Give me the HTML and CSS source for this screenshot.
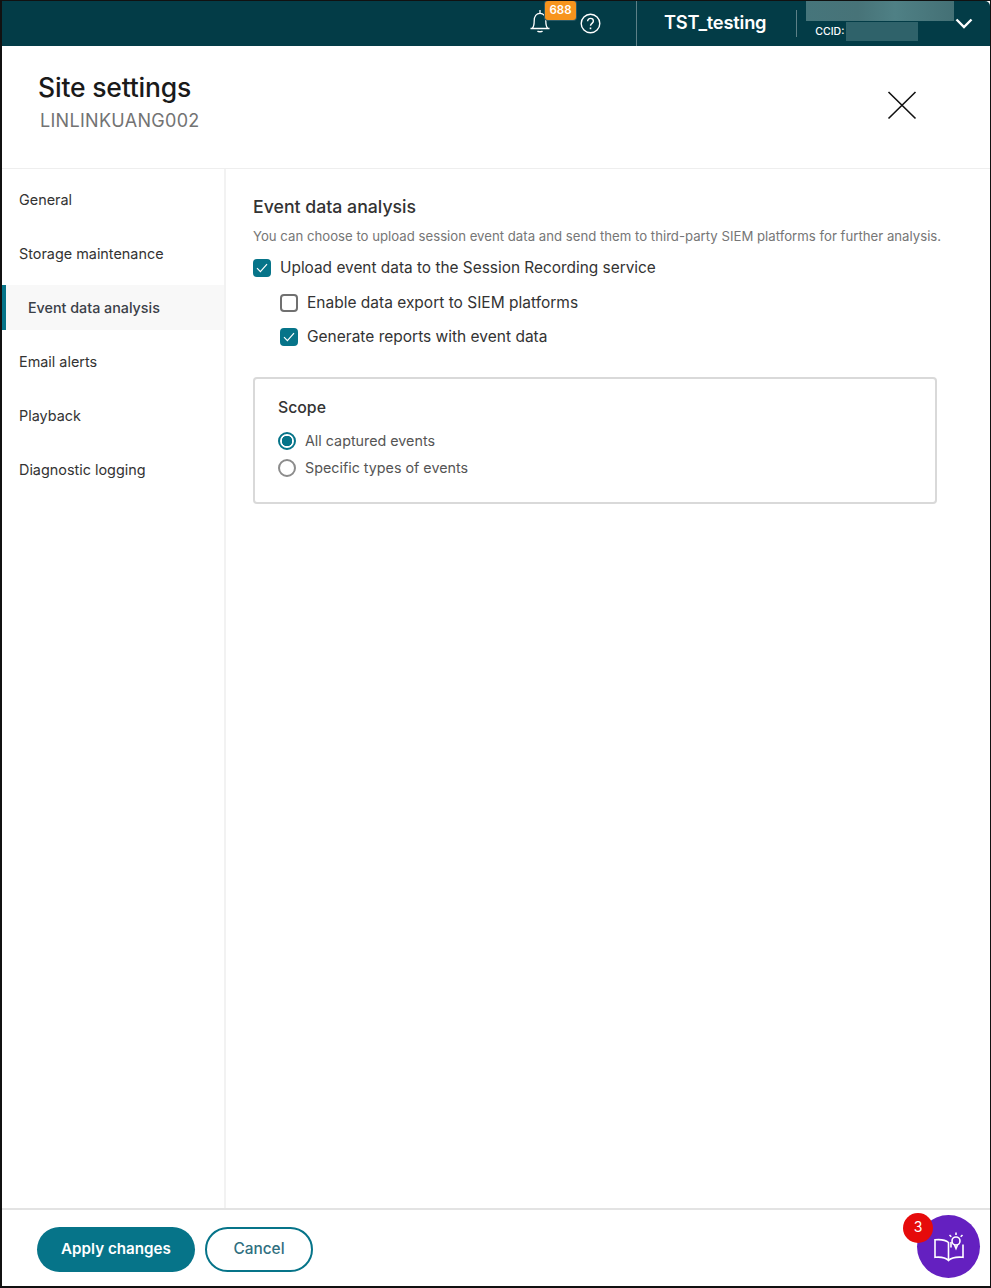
FILE: index.html
```html
<!DOCTYPE html>
<html lang="en">
<head>
<meta charset="utf-8">
<title>Site settings</title>
<link rel="stylesheet" href="styles.css">
</head>
<body>
<div class="frame">
  <header class="topbar">
    <div class="bell-wrap">
      <svg class="bell" width="22" height="24" viewBox="0 0 22 24" fill="none" stroke="#fff" stroke-width="1.3"><path d="M1.500 19.500h19M3 19.500c1.800-1.600 2.200-3.600 2.200-7.500 0-4.500 2.200-7.600 5.800-7.600s5.800 3.100 5.800 7.600c0 3.900.4 5.900 2.200 7.500"/><path d="M11 1v3.400M8.500 22c.8 1 4.200 1 5 0"/></svg>
      <span class="badge">688</span>
    </div>
    <svg class="help" width="21" height="21" viewBox="0 0 21 21" fill="none" stroke="#fff" stroke-width="1.400"><circle cx="10.500" cy="10.500" r="9.300"/><path d="M7.600 8.300c0-1.800 1.300-2.900 2.900-2.900s2.900 1.100 2.900 2.700c0 2.200-2.900 2.300-2.900 4.600"/><path d="M10.500 14.500v1.700" stroke-width="1.600"/></svg>
    <div class="divider tall"></div>
    <div class="tenant">TST_testing</div>
    <div class="divider short"></div>
    <div class="account">
      <div class="blur-name"></div>
      <div class="ccid-row"><span class="ccid">CCID:</span><span class="blur-id"></span></div>
    </div>
    <svg class="chev" width="18" height="11" viewBox="0 0 18 11" fill="none" stroke="#fff" stroke-width="2.400"><path d="M1.500 1.500L9 9l7.500-7.500"/></svg>
  </header>

  <section class="title-area">
    <div>
      <h1 class="title">Site settings</h1>
      <div class="subtitle">LINLINKUANG002</div>
    </div>
    <svg class="close" width="30" height="30" viewBox="0 0 30 30" fill="none" stroke="#111" stroke-width="1.600"><path d="M1.500 2L28.500 28.500M28.500 2L1.500 28.500"/></svg>
  </section>

  <div class="body-area">
    <nav class="sidenav">
      <a class="nav-item">General</a>
      <a class="nav-item">Storage maintenance</a>
      <a class="nav-item active">Event data analysis</a>
      <a class="nav-item">Email alerts</a>
      <a class="nav-item">Playback</a>
      <a class="nav-item">Diagnostic logging</a>
    </nav>
    <main class="content">
      <h2 class="section-title">Event data analysis</h2>
      <p class="section-desc">You can choose to upload session event data and send them to third-party SIEM platforms for further analysis.</p>
      <div class="check-row">
        <span class="box on"><svg width="12" height="10" viewBox="0 0 12 10" fill="none" stroke="#fff" stroke-width="1.200"><path d="M1 5.200l3.400 3.400L11 1.200"/></svg></span>
        <span>Upload event data to the Session Recording service</span>
      </div>
      <div class="check-row sub first">
        <span class="box"></span>
        <span>Enable data export to SIEM platforms</span>
      </div>
      <div class="check-row sub second">
        <span class="box on"><svg width="12" height="10" viewBox="0 0 12 10" fill="none" stroke="#fff" stroke-width="1.200"><path d="M1 5.200l3.400 3.400L11 1.200"/></svg></span>
        <span>Generate reports with event data</span>
      </div>
      <fieldset class="scope">
        <div class="scope-title">Scope</div>
        <div class="radio-row"><span class="radio on"></span><span>All captured events</span></div>
        <div class="radio-row"><span class="radio"></span><span>Specific types of events</span></div>
      </fieldset>
    </main>
  </div>

  <footer class="footer">
    <button class="btn primary">Apply changes</button>
    <button class="btn outline">Cancel</button>
    <div class="guide">
      <svg width="34" height="34" viewBox="0 0 34 34" fill="none" stroke="#fff" stroke-width="1.600"><path d="M16.500 30.500V12.500C14 10.300 9 9.200 3 9.800v17.500c5.500-.6 10.500.2 13.500 3.200 3-3 8-3.800 14.500-3.200V14.500"/><path d="M19 17.500V12"/><circle cx="24" cy="11" r="4"/><path d="M22.500 15l1.500 3.500 1.500-3.500"/><path d="M24 2.500v2.500M17.500 5l1.800 1.800M30.500 5l-1.800 1.800"/></svg>
      <span class="guide-count">3</span>
    </div>
  </footer>
</div>
</body>
</html>
```
FILE: styles.css
```css
* { box-sizing: border-box; }
html, body { margin: 0; padding: 0; height: 100%; }
body {
  background: #fff;
  font-family: "Inter", "Liberation Sans", sans-serif;
  color: #333;
}
.frame {
  width: 991px;
  height: 1288px;
  border: 1px solid #111;
  border-left-width: 2px;
  border-bottom-width: 2px;
  display: flex;
  flex-direction: column;
  overflow: hidden;
}

.topbar {
  height: 45px;
  flex: none;
  background: #033c47;
  border-top-right-radius: 5px;
  display: flex;
  align-items: center;
  padding-left: 527px;
  color: #fff;
}
.bell-wrap { position: relative; width: 24px; height: 26px; margin-top: -3px; }
.badge {
  position: absolute;
  left: 16px;
  top: -8px;
  width: 31px;
  height: 19px;
  background: #f7941d;
  border-radius: 3px;
  box-shadow: 0 0 0 1px #2c5a66;
  font-size: 11.500px;
  font-weight: 600;
  line-height: 18px;
  text-align: center;
  color: #fff;
}
.help { margin-left: 27px; margin-top: -1px; }
.divider { width: 1px; background: #5d8087; }
.divider.tall { height: 45px; margin-left: 35px; }
.divider.short { height: 27px; margin-left: 30px; }
.tenant { margin-left: 27px; font-size: 18.300px; font-weight: 600; letter-spacing: -0.200px; margin-top: -3px; }
.account { width: 148px; margin-left: 9px; height: 45px; }
.blur-name {
  height: 20px;
  background: linear-gradient(90deg, #46757b, #477378 35%, #4f8085 60%, #447075);
}
.ccid-row { display: flex; align-items: center; height: 19px; margin-top: 1px; }
.ccid { font-size: 10.500px; margin-left: 9px; width: 31px; font-weight: 500; }
.blur-id { width: 72px; height: 19px; background: #2f626a; }
.chev { margin-left: 1px; }

.title-area {
  height: 123px;
  flex: none;
  display: flex;
  justify-content: space-between;
  border-bottom: 1px solid #eee;
  padding: 24px 73px 0 36px;
}
.title { margin: 0; font-size: 26.500px; font-weight: 500; line-height: 34px; color: #1a1a1a; letter-spacing: -0.200px; }
.subtitle { margin: 5px 0 0 2px; font-size: 18px; line-height: 24px; color: #737373; letter-spacing: 0.300px; }
.close { margin-top: 20px; }

.body-area { flex: 1; display: flex; min-height: 0; }
.sidenav {
  width: 224px;
  flex: none;
  border-right: 2px solid #f2f2f2;
  padding-top: 8px;
}
.nav-item {
  display: flex;
  align-items: center;
  height: 45px;
  margin-bottom: 9px;
  padding-left: 17px;
  font-size: 14.400px;
  color: #333;
}
.nav-item.active {
  background: #f8f8f8;
  border-left: 4px solid #067489;
  padding-left: 22px;
  font-size: 14.300px;
  font-weight: 500;
  color: #3a4048;
}
.nav-item:last-child { margin-bottom: 0; }
.content { flex: 1; padding: 26px 0 0 27px; }
.section-title { margin: 0; font-size: 17.700px; font-weight: 500; line-height: 24px; color: #333; }
.section-desc { margin: 7px 0 0; font-size: 13.200px; line-height: 20px; color: #767676; white-space: nowrap; }
.check-row { display: flex; align-items: center; gap: 9px; font-size: 15.400px; line-height: 22px; color: #333; margin-top: 11px; }
.check-row.sub { margin-left: 27px; font-size: 15.500px; }
.check-row.first { margin-top: 13px; }
.check-row.second { margin-top: 12px; }
.box {
  width: 18px;
  height: 18px;
  border: 2px solid #707070;
  border-radius: 4px;
  display: flex;
  align-items: center;
  justify-content: center;
  flex: none;
}
.box.on { background: #067489; border-color: #067489; }
.scope {
  margin: 29px 0 0;
  width: 684px;
  height: 127px;
  border: 2px solid #d9d9d9;
  border-radius: 4px;
  padding: 18px 0 0 23px;
}
.scope-title { font-size: 15.800px; font-weight: 500; line-height: 22px; color: #333; margin-bottom: 8px; }
.radio-row { display: flex; align-items: center; gap: 9px; height: 27px; font-size: 14.300px; color: #555; }
.radio {
  width: 18px;
  height: 18px;
  border: 2px solid #8c8c8c;
  border-radius: 50%;
  flex: none;
}
.radio.on { border-color: #067489; background: radial-gradient(circle, #067489 0 5px, #fff 5.500px); }

.footer {
  height: 78px;
  flex: none;
  border-top: 2px solid #e3e3e3;
  display: flex;
  align-items: center;
  padding: 2px 0 0 35px;
  gap: 10px;
  position: relative;
}
.btn {
  height: 45px;
  padding: 0 0 2px;
  border-radius: 23px;
  font-family: inherit;
  font-size: 15.200px;
  font-weight: 600;
  cursor: pointer;
}
.btn.primary { width: 158px; background: #067489; color: #fff; border: none; }
.btn.outline { width: 108px; background: #fff; color: #2f6f80; border: 2px solid #067489; font-weight: 500; font-size: 15.400px; }
.guide {
  position: absolute;
  right: 10px;
  top: 5px;
  width: 63px;
  height: 63px;
  background: #6420c0;
  border-radius: 50%;
  display: flex;
  align-items: center;
  justify-content: center;
}
.guide-count {
  position: absolute;
  left: -14px;
  top: -2px;
  width: 30px;
  height: 30px;
  background: #e60b0b;
  border-radius: 50%;
  color: #fff;
  font-size: 14px;
  line-height: 28px;
  text-align: center;
}
```
